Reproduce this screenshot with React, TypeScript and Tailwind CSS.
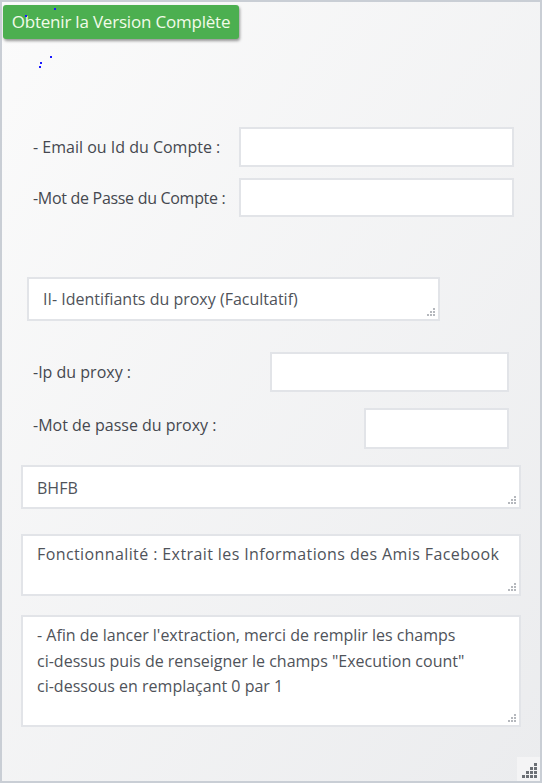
import React from 'react';

// Small dotted triangle, drawn in the lower right corner of a resizable box
function Grip({ size = 'sm' }: { size?: 'sm' | 'lg' }) {
  const dots =
    size === 'sm'
      ? [
          [6, 0],
          [3, 3],
          [6, 3],
          [0, 6],
          [3, 6],
          [6, 6],
        ]
      : [
          [12, 0],
          [8, 4],
          [12, 4],
          [4, 8],
          [8, 8],
          [12, 8],
          [0, 12],
          [4, 12],
          [8, 12],
          [12, 12],
        ];
  const box = size === 'sm' ? 8 : 15;
  const dot = size === 'sm' ? 2 : 3;
  return (
    <svg width={box} height={box} viewBox={`0 0 ${box} ${box}`} className="block">
      {dots.map(([x, y], i) => (
        <rect key={i} x={x} y={y} width={dot} height={dot} fill={size === 'sm' ? '#b5b8bd' : '#6b6f75'} />
      ))}
    </svg>
  );
}

function Field({ className }: { className: string }) {
  return <div className={`bg-white border-2 border-[#e2e4e8] ${className}`} />;
}

function TextBox({ className, children }: { className: string; children: React.ReactNode }) {
  return (
    <div className={`relative bg-white border-2 border-[#e2e4e8] text-[16px] text-[#4f535a] ${className}`}>
      {children}
      <div className="absolute right-[3px] bottom-[3px]">
        <Grip />
      </div>
    </div>
  );
}

export default function App() {
  return (
    <div
      className="relative w-[542px] h-[783px] overflow-hidden border-2 border-[#c9ced5] bg-gradient-to-br from-[#fbfbfb] to-[#ebecee]"
      style={{ fontFamily: '"Open Sans", "Liberation Sans", sans-serif' }}
    >
      {/* stray blue pixels */}
      <div className="absolute left-[52px] top-[6px] w-[2px] h-[2px] bg-[#1a1aff] z-10" />
      <div className="absolute left-[23px] top-[13px] w-[2px] h-[2px] bg-[#1a1aff] z-10" />
      <div className="absolute left-[48px] top-[54px] w-[2px] h-[2px] bg-[#1a1aff]" />
      <div className="absolute left-[38px] top-[60px] w-[2px] h-[2px] bg-[#1a1aff]" />
      <div className="absolute left-[37px] top-[64px] w-[2px] h-[2px] bg-[#1a1aff]" />

      <button className="ml-[1px] mt-[3px] w-[236px] h-[34px] rounded-[3px] bg-[#4caf50] text-[#f2fbe9] text-[17px] tracking-[-0.2px] shadow-[1px_2px_3px_rgba(0,0,0,0.4)] flex items-center justify-center">
        Obtenir la Version Complète
      </button>

      <div className="mt-[88px] flex items-center pl-[31px] text-[16px] text-[#45484f]">
        <span className="w-[206px]">- Email ou Id du Compte :</span>
        <Field className="w-[275px] h-[40px]" />
      </div>
      <div className="mt-[11px] flex items-center pl-[31px] text-[16px] text-[#45484f]">
        <span className="w-[206px] tracking-[-0.3px]">-Mot de Passe du Compte :</span>
        <Field className="w-[275px] h-[39px]" />
      </div>

      <TextBox className="mt-[60px] ml-[25px] w-[413px] h-[44px] pl-[14px] pt-[8px]">
        II- Identifiants du proxy (Facultatif)
      </TextBox>

      <div className="mt-[31px] flex items-center pl-[31px] text-[16px] text-[#45484f]">
        <span className="w-[237px]">-Ip du proxy :</span>
        <Field className="w-[239px] h-[40px]" />
      </div>
      <div className="mt-[16px] flex items-center pl-[31px] text-[16px] text-[#45484f]">
        <span className="w-[331px] -mt-[8px]">-Mot de passe du proxy :</span>
        <Field className="w-[145px] h-[41px]" />
      </div>

      <TextBox className="mt-[16px] ml-[19px] w-[500px] h-[44px] pl-[14px] pt-[9px]">BHFB</TextBox>

      <TextBox className="mt-[25px] ml-[19px] w-[500px] h-[62px] pl-[14px] pt-[6px] tracking-[0.4px]">
        Fonctionnalité : Extrait les Informations des Amis Facebook
      </TextBox>

      <TextBox className="mt-[19px] ml-[19px] w-[500px] h-[112px] pl-[14px] pt-[6px] leading-[25.5px]">
        - Afin de lancer l'extraction, merci de remplir les champs
        <br />
        ci-dessus puis de renseigner le champs "Execution count"
        <br />
        ci-dessous en remplaçant 0 par 1
      </TextBox>

      <div className="absolute right-0 bottom-0 w-[23px] h-[24px] bg-[#f4f4f5] flex items-end justify-end p-[3px]">
        <Grip size="lg" />
      </div>
    </div>
  );
}
